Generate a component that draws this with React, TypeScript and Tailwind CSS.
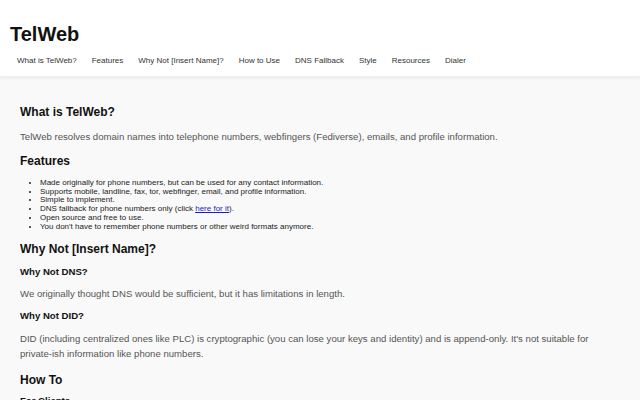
import React from "react";

const navItems = [
  "What is TelWeb?",
  "Features",
  "Why Not [Insert Name]?",
  "How to Use",
  "DNS Fallback",
  "Style",
  "Resources",
  "Dialer",
];

export default function App() {
  return (
    <div
      className="min-h-[400px] bg-[#f9f9f9] text-[#111]"
      style={{ fontFamily: '"Liberation Sans", Arial, sans-serif' }}
    >
      <header className="bg-white pl-[10px] pt-[23px] pb-[11px] shadow-[0_1px_3px_rgba(0,0,0,0.08)] border-b border-[#eeeeee]">
        <h1 className="text-[20px] font-bold leading-[22px] text-[#111]">TelWeb</h1>
        <nav className="mt-[11px] flex gap-[15px] pl-[7px] text-[8px] leading-[9.4px] text-[#333]">
          {navItems.map((n) => (
            <span key={n}>{n}</span>
          ))}
        </nav>
      </header>
      <main className="px-[20px] pt-[28px]">
        <h2 className="text-[12px] font-bold leading-[14px]">What is TelWeb?</h2>
        <p className="mt-[10px] text-[9.6px] leading-[15.36px] text-[#555]">
          TelWeb resolves domain names into telephone numbers, webfingers (Fediverse), emails, and profile information.
        </p>
        <h2 className="mt-[9px] text-[12px] font-bold leading-[14px]">Features</h2>
        <ul className="mt-[11px] list-disc pl-[20px] text-[8px] leading-[8.8px] text-[#222]">
          <li>Made originally for phone numbers, but can be used for any contact information.</li>
          <li>Supports mobile, landline, fax, tor, webfinger, email, and profile information.</li>
          <li>Simple to implement.</li>
          <li>
            DNS fallback for phone numbers only (click{" "}
            <span className="text-[#1a1acc] underline">here for it</span>).
          </li>
          <li>Open source and free to use.</li>
          <li>You don't have to remember phone numbers or other weird formats anymore.</li>
        </ul>
        <h2 className="mt-[10px] text-[12px] font-bold leading-[14px]">Why Not [Insert Name]?</h2>
        <h3 className="mt-[10px] text-[9.6px] font-bold leading-[11px]">Why Not DNS?</h3>
        <p className="mt-[9px] text-[9.6px] leading-[15.36px] text-[#555]">
          We originally thought DNS would be sufficient, but it has limitations in length.
        </p>
        <h3 className="mt-[9px] text-[9.6px] font-bold leading-[11px]">Why Not DID?</h3>
        <p className="mt-[10px] max-w-[580px] text-[9.6px] leading-[15.36px] text-[#555]">
          DID (including centralized ones like PLC) is cryptographic (you can lose your keys and identity) and is append-only. It's not suitable for private-ish information like phone numbers.
        </p>
        <h2 className="mt-[11px] text-[12px] font-bold leading-[14px]">How To</h2>
        <h3 className="mt-[8px] text-[9.6px] font-bold leading-[11px]">For Clients</h3>
      </main>
    </div>
  );
}
